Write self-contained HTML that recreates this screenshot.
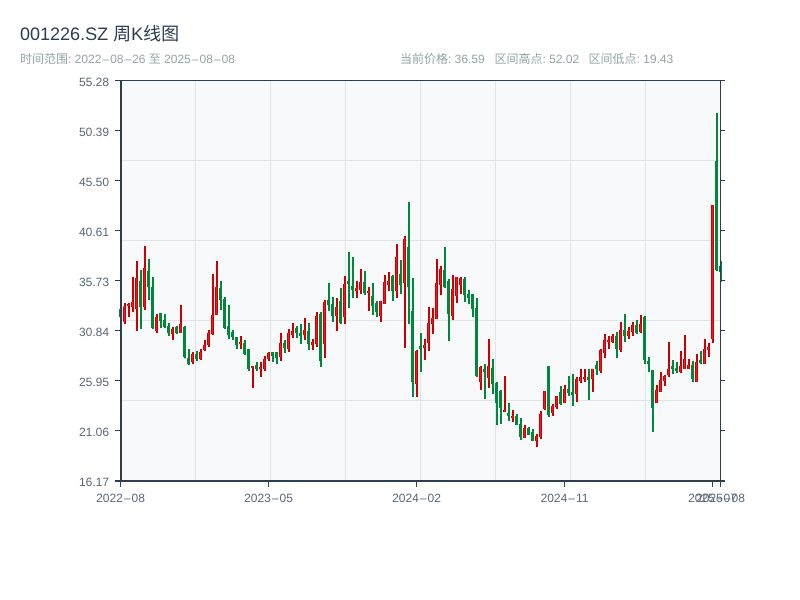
<!DOCTYPE html>
<html><head><meta charset="utf-8"><style>
html,body{margin:0;padding:0;background:#fff;width:800px;height:600px;overflow:hidden}
svg{display:block}
text{font-family:"WenQuanYi Zen Hei","Liberation Sans","Noto Sans CJK SC",sans-serif;text-rendering:geometricPrecision}
.w{fill:none;stroke-width:2}.b{fill:none;stroke-width:3}.c{fill:none;stroke-width:1;stroke:#f01820}
.r{stroke:#cc0000}.g{stroke:#00873c}
</style></head><body>
<svg width="800" height="600" viewBox="0 0 800 600" xmlns="http://www.w3.org/2000/svg">
<text x="20" y="40" font-size="18" fill="#2c3e50">001226.SZ 周K线图</text>
<text x="20" y="63" font-size="12" fill="#95a5a6">时间范围: 2022<tspan dx="1">–</tspan><tspan dx="1">08</tspan><tspan dx="1">–</tspan><tspan dx="1">26</tspan> 至 2025<tspan dx="1">–</tspan><tspan dx="1">08</tspan><tspan dx="1">–</tspan><tspan dx="1">08</tspan></text>
<text x="400" y="63" font-size="12" fill="#95a5a6">当前价格: 36.59</text>
<text x="494.5" y="63" font-size="12" fill="#95a5a6">区间高点: 52.02</text>
<text x="588.5" y="63" font-size="12" fill="#95a5a6">区间低点: 19.43</text>

<rect x="120" y="80" width="600" height="400" fill="#f8f9fa"/>
<path d="M120 160.5H720M120 240.5H720M120 320.5H720M120 400.5H720M195.5 80V480M270.5 80V480M345.5 80V480M420.5 80V480M495.5 80V480M570.5 80V480M645.5 80V480" stroke="#e0e3e7" stroke-width="1" fill="none"/>

<defs>
<path id="ar" d="M124 229V275M128 222V228M132 216V231M136 144V237M144 114V231M156 261V303M172 297V312M180 282V309M192 372V396M200 366V387M204 345V360M208 309V345M212 255V312M216 171V255M240 336V342M252 408V414M260 411V417M264 387V417M268 369V387"/>
<path id="br" d="M280 459V501M288 429V477M292 423V435M304 420V435M312 456V465M316 378V462M324 336V462M336 351V378M344 282V381M356 294V303M360 276V300M368 303V309M380 333V378M384 276V342M388 273V285M396 201V303M404 147V279M416 483V582M424 465V474M428 399V459"/>
<path id="cr" d="M432 234V252M436 129V237M440 87V135M452 147V228M456 111V168M460 114V135M480 381V426M488 378V414M504 510V516M512 528V534M524 564V594M536 588V603M540 522V591M544 453V507M552 498V519M556 468V501M564 447V489M576 417V462"/>
<path id="dr" d="M580 261V273M584 261V267M592 237V267M600 180V243M604 150V189M608 150V156M612 138V156M620 120V180M628 123V138M632 105V126M640 102V126M656 300V339M660 270V306M664 258V273M668 237V255M680 228V246M684 207V237M688 225V237M696 216V276M704 177V222M708 171V180"/>
<path id="er" d="M712 315V717"/>
</defs>

<!-- Group A -->
<g transform="translate(1,230) scale(1,.33333)">
<path class="w r" d="M124 219V282M128 219V261M132 141V246M136 93V303M144 48V240M156 252V309M172 291V330M180 225V309M192 366V402M200 357V390M204 330V363M208 300V351M212 132V315M216 93V255M240 318V357M252 408V474M260 396V441M264 378V423M268 366V393"/>
<path class="w g" d="M120 237V261M140 120V297M148 87V210M152 141V297M160 249V294M164 252V294M168 279V318M176 288V312M184 288V385M188 357V405M196 363V393M220 153V240M224 201V297M228 225V327M232 300V330M236 321V357M244 330V375M248 357V423M256 396V423"/>
</g>
<g transform="translate(.5,230) scale(1,.33333)">
<use href="#ar" class="b r"/><use href="#ar" class="c"/>
<path class="b g" d="M120 237V261M140 153V231M148 123V171M152 171V294M160 249V273M164 270V291M168 288V309M176 291V309M184 291V381M188 384V402M196 372V387M220 174V210M224 207V294M228 288V315M232 306V321M236 321V345M244 339V372M248 357V417M256 405V417"/>
</g>

<!-- Group B -->
<g transform="translate(1,190) scale(1,.33333)">
<path class="w r" d="M280 429V513M288 417V486M292 399V444M304 384V450M312 447V480M316 366V471M324 330V504M336 324V423M344 258V402M356 273V324M360 237V312M368 291V363M380 333V396M384 255V342M388 246V303M396 162V324M404 138V474M416 480V621M424 447V510M428 351V483"/>
<path class="w g" d="M272 486V516M276 486V522M284 450V489M296 408V444M300 402V462M308 399V480M320 366V531M328 279V363M332 321V396M340 294V402M348 186V354M352 201V324M364 243V315M372 279V375M376 333V381M392 255V333M400 210V312M408 36V402M412 264V621M420 429V546"/>
</g>
<g transform="translate(.5,190) scale(1,.33333)">
<use href="#br" class="b r"/><use href="#br" class="c"/>
<path class="b g" d="M272 486V498M276 486V504M284 459V474M296 414V429M300 429V438M308 423V462M320 372V513M328 330V345M332 342V378M340 333V399M348 273V282M352 288V300M364 276V309M372 318V348M376 339V366M392 258V303M400 252V285M408 171V291M412 363V576M420 468V477"/>
</g>

<!-- Group C -->
<g transform="translate(1,240) scale(1,.33333)">
<path class="w r" d="M432 204V282M436 57V237M440 78V165M452 105V240M456 111V189M460 111V162M480 378V450M488 297V444M504 408V516M512 510V546M524 555V594M536 582V621M540 513V597M544 453V510M552 492V528M556 468V507M564 435V489M576 411V486"/>
<path class="w g" d="M444 21V144M448 117V303M464 111V186M468 150V192M472 162V231M476 174V411M484 372V477M492 357V462M496 426V555M500 450V552M508 489V543M516 522V555M520 534V600M528 561V585M532 567V603M548 378V531M560 438V495M568 408V468M572 402V498"/>
</g>
<g transform="translate(.5,240) scale(1,.33333)">
<use href="#cr" class="b r"/><use href="#cr" class="c"/>
<path class="b g" d="M444 90V141M448 123V222M464 117V165M468 162V174M472 162V207M476 204V408M484 387V396M492 384V432M496 429V489M500 453V504M508 519V528M516 528V555M520 552V591M528 564V585M532 576V603M548 378V525M560 456V492M568 447V459M572 456V465"/>
</g>

<!-- Group D -->
<g transform="translate(1,290) scale(1,.33333)">
<path class="w r" d="M580 237V279M584 237V276M592 237V306M600 177V249M604 132V204M608 138V177M612 132V159M620 96V186M628 111V147M632 96V138M640 75V129M656 285V339M660 246V306M664 255V288M668 156V261M680 183V249M684 135V237M688 207V237M696 192V276M704 147V222M708 159V201"/>
<path class="w g" d="M588 237V330M596 213V255M616 126V204M624 72V156M636 90V132M644 78V222M648 201V246M652 240V426M672 210V252M676 216V249M692 213V276M700 183V222"/>
</g>
<g transform="translate(.5,290) scale(1,.33333)">
<use href="#dr" class="b r"/><use href="#dr" class="c"/>
<path class="b g" d="M588 261V270M596 225V237M616 138V177M624 120V138M636 105V129M644 81V210M648 213V222M652 240V354M672 228V237M676 234V243M692 225V267M700 210V219"/>
</g>

<!-- Group E -->
<g transform="translate(1,100) scale(1,.33333)">
<path class="w r" d="M712 315V729"/>
<path class="w g" d="M716 39V513M720 483V546"/>
</g>
<g transform="translate(.5,100) scale(1,.33333)">
<use href="#er" class="b r"/><use href="#er" class="c"/>
<path class="b g" d="M716 183V510M720 498V516"/>
</g>

<!-- Axes -->
<g fill="#2c3e50">
<rect x="120" y="80" width="2" height="402"/>
<rect x="720" y="80" width="1" height="406"/>
<rect x="115" y="80" width="610" height="1"/>
<rect x="115" y="480" width="610" height="2"/>
</g>
<path d="M115 130.5H120M115 180.5H120M115 230.5H120M115 280.5H120M115 330.5H120M115 380.5H120M115 430.5H120M720 130.5H725M720 180.5H725M720 230.5H725M720 280.5H725M720 330.5H725M720 380.5H725M720 430.5H725M120.5 482V487M268.5 482V487M416.5 482V487M564.5 482V487M712.5 482V487M720.5 482V487" stroke="#2c3e50" stroke-width="1" fill="none"/>

<g font-size="12" fill="#5a6877" text-anchor="end">
<text x="109" y="86">55.28</text>
<text x="109" y="136">50.39</text>
<text x="109" y="186">45.50</text>
<text x="109" y="236">40.61</text>
<text x="109" y="286">35.73</text>
<text x="109" y="336">30.84</text>
<text x="109" y="386">25.95</text>
<text x="109" y="436">21.06</text>
<text x="109" y="486">16.17</text>
</g>
<g font-size="12" fill="#5a6877" text-anchor="middle">
<text x="120.5" y="502">2022<tspan dx="1">–</tspan><tspan dx="1">08</tspan></text>
<text x="268.5" y="502">2023<tspan dx="1">–</tspan><tspan dx="1">05</tspan></text>
<text x="416.5" y="502">2024<tspan dx="1">–</tspan><tspan dx="1">02</tspan></text>
<text x="564.5" y="502">2024<tspan dx="1">–</tspan><tspan dx="1">11</tspan></text>
<text x="712.5" y="502">2025<tspan dx="1">–</tspan><tspan dx="1">07</tspan></text>
<text x="720.5" y="502">2025<tspan dx="1">–</tspan><tspan dx="1">08</tspan></text>
</g>
</svg>
</body></html>
